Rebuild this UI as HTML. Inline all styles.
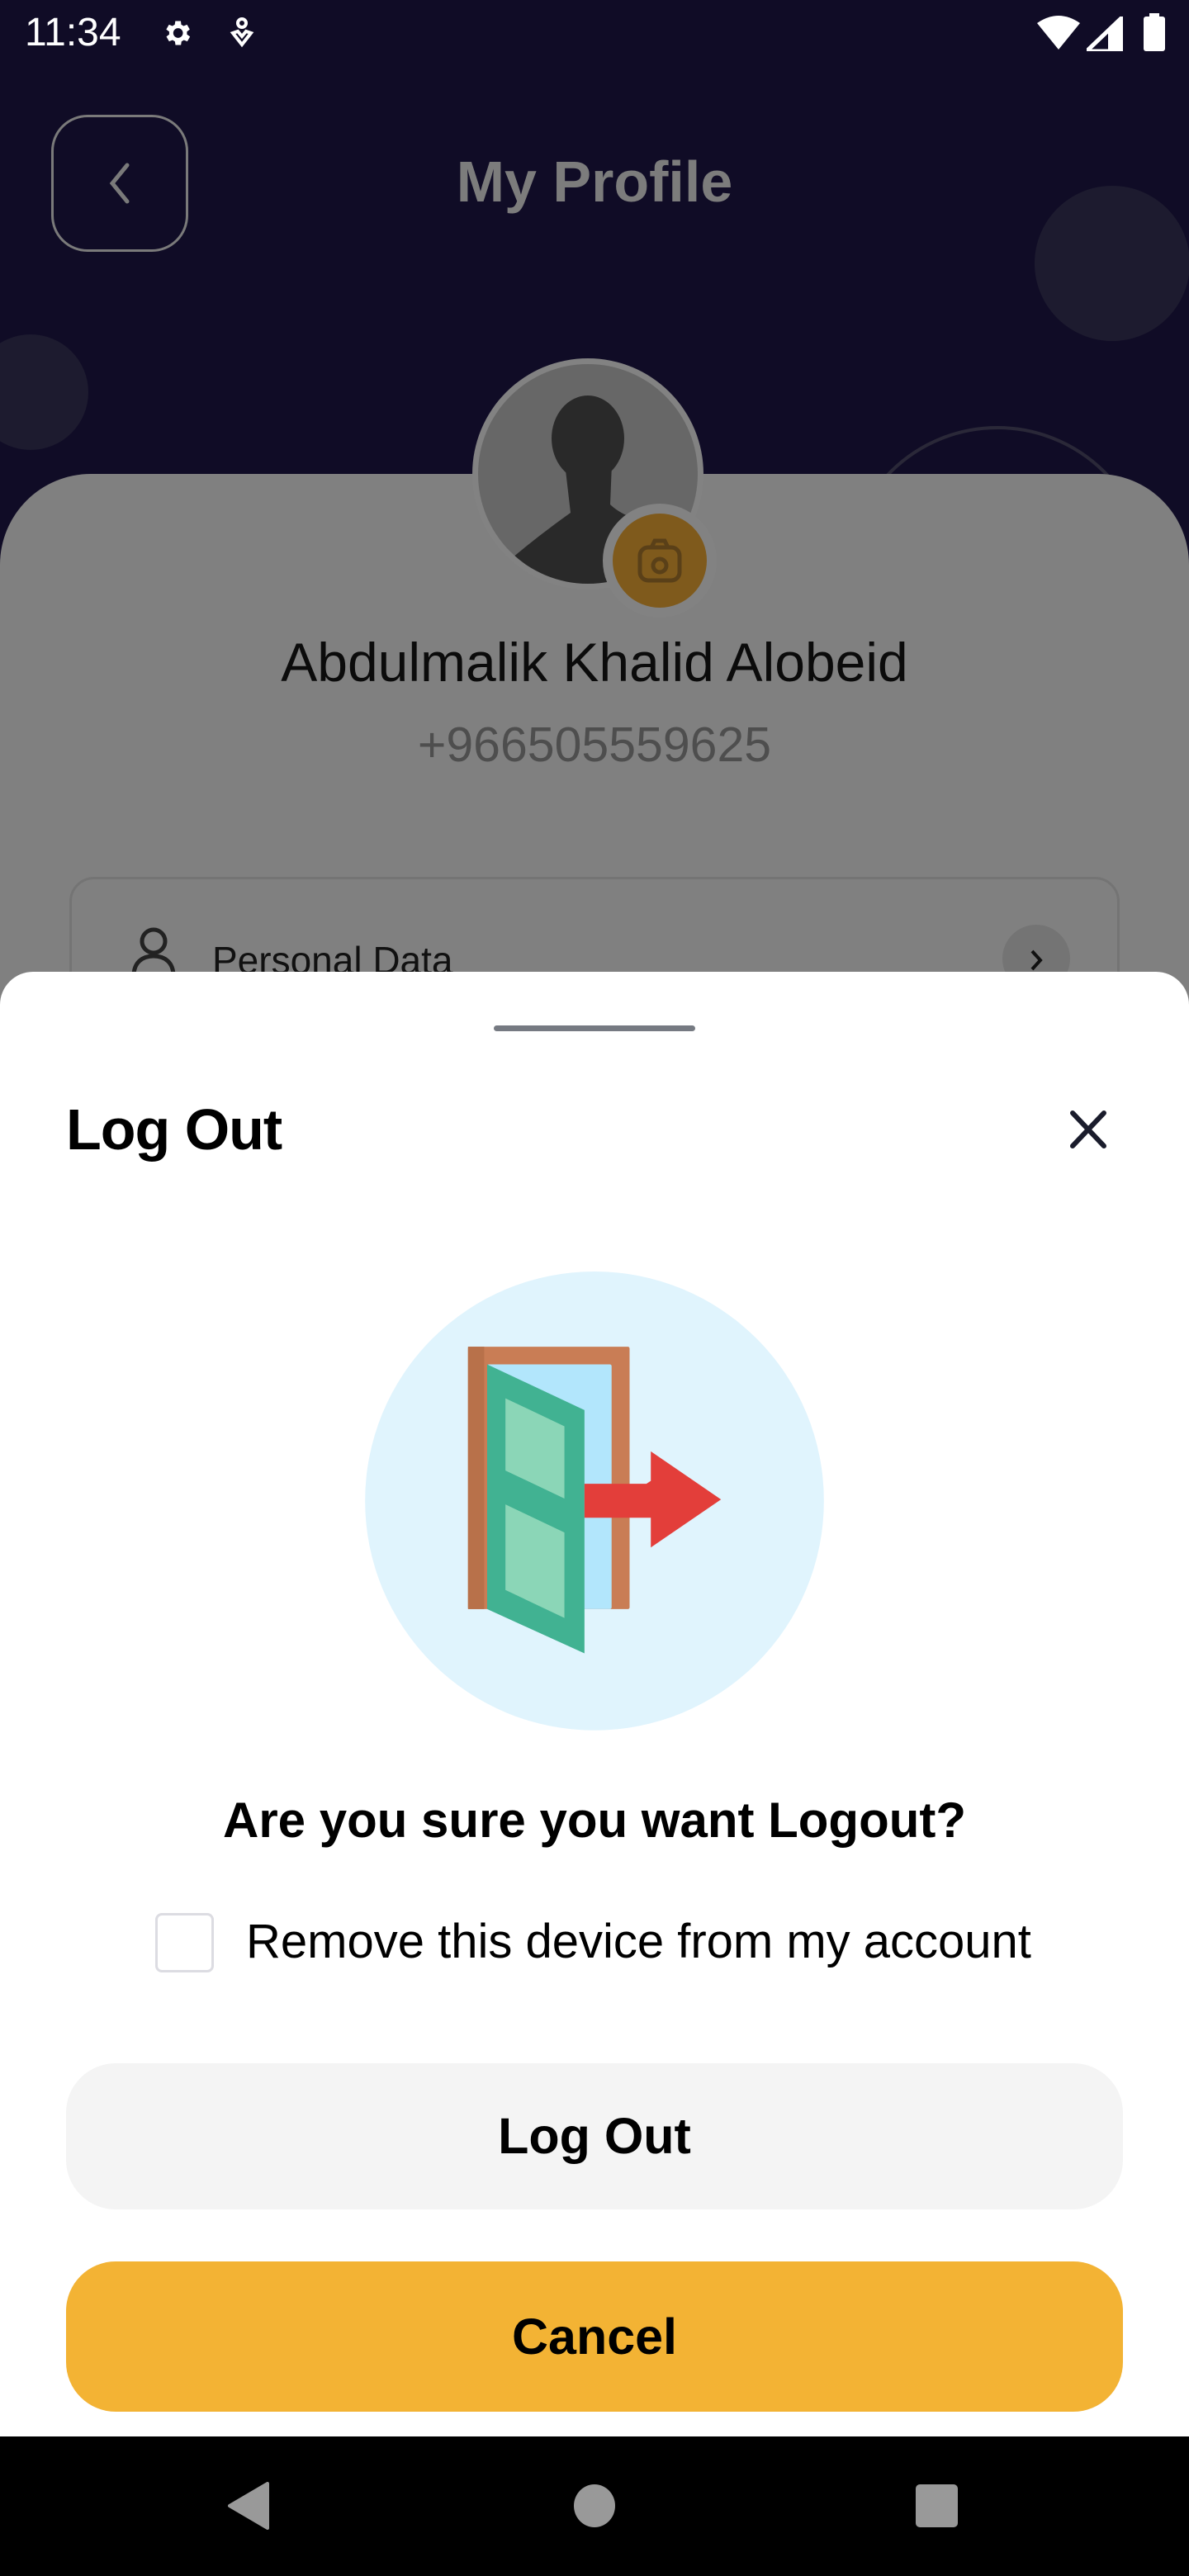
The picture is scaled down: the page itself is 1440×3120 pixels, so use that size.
<!DOCTYPE html>
<html><head><meta charset="utf-8"><style>
*{margin:0;padding:0;box-sizing:border-box}
body{width:1440px;height:3120px;position:relative;overflow:hidden;background:#100c26;font-family:"Liberation Sans",sans-serif}
.a{position:absolute}
</style></head><body>
<div class="a" style="left:0;top:0;width:1440px;height:1200px;background:#100c26"></div>
<div class="a" style="left:1253px;top:225px;width:188px;height:188px;border-radius:50%;background:#1d1b2f"></div>
<div class="a" style="left:-33px;top:405px;width:140px;height:140px;border-radius:50%;background:#1d1b2f"></div>
<div class="a" style="left:1023px;top:516px;width:370px;height:370px;border-radius:50%;border:4px solid #2a2838"></div>
<div class="a" style="left:0;top:574px;width:1440px;height:700px;border-radius:110px 110px 0 0;background:#808080"></div>
<div class="a" style="left:30px;top:12px;color:#fff;font-size:48px">11:34</div>
<svg class="a" style="left:194px;top:20px" width="40" height="40" viewBox="0 0 24 24"><path fill="#fff" d="M19.4 13a7.5 7.5 0 000-2l2.1-1.6-2-3.5-2.5 1a7 7 0 00-1.7-1L15 3.3h-4l-.4 2.6a7 7 0 00-1.7 1l-2.5-1-2 3.5L6.6 11a7.5 7.5 0 000 2l-2.1 1.6 2 3.5 2.5-1a7 7 0 001.7 1l.4 2.6h4l.4-2.6a7 7 0 001.7-1l2.5 1 2-3.5zM13 15.5a3.5 3.5 0 110-7 3.5 3.5 0 010 7z"/></svg>
<svg class="a" style="left:276px;top:20px" width="34" height="40" viewBox="0 0 17 20"><circle cx="8.5" cy="4" r="2.5" fill="none" stroke="#fff" stroke-width="2"/><path d="M3 10l5.5 7 5.5-7-3 -1-2.5 3-2.5-3z" fill="none" stroke="#fff" stroke-width="2"/></svg>
<svg class="a" style="left:1256px;top:18px" width="52" height="44" viewBox="0 0 26 22"><path d="M0 5Q13-4 26 5L13 21z" fill="#fff"/></svg>
<svg class="a" style="left:1316px;top:20px" width="44" height="42" viewBox="0 0 22 21"><path d="M0 21L22 0v21z" fill="none" stroke="#fff" stroke-width="2.5"/><path d="M13 21V8l9-8v21z" fill="#fff"/></svg>
<div class="a" style="left:1385px;top:20px;width:26px;height:42px;background:#fff;border-radius:3px"></div>
<div class="a" style="left:1392px;top:16px;width:12px;height:6px;background:#fff"></div>
<div class="a" style="left:62px;top:139px;width:166px;height:166px;border:3px solid #7a7a7a;border-radius:44px"></div>
<svg class="a" style="left:128px;top:196px" width="34" height="52" viewBox="0 0 34 52"><path d="M26 4L8 26l18 22" fill="none" stroke="#7a7a7a" stroke-width="5" stroke-linecap="round"/></svg>
<div class="a" style="left:0;top:180px;width:1440px;text-align:center;color:#7c7c7c;font-size:70px;font-weight:bold">My Profile</div>
<div class="a" style="left:572px;top:434px;width:280px;height:280px;border-radius:50%;background:#828282"></div>
<div class="a" style="left:579px;top:441px;width:266px;height:266px;border-radius:50%;background:#676767;overflow:hidden">
<svg width="266" height="266" viewBox="0 0 266 266"><ellipse cx="133" cy="90" rx="44" ry="52" fill="#292929"/><path d="M105 120L112 180Q70 210 35 240L60 270H230L240 200Q180 190 160 170L162 120z" fill="#292929"/></svg></div>
<div class="a" style="left:730px;top:610px;width:138px;height:138px;border-radius:50%;background:#828282"></div>
<div class="a" style="left:742px;top:622px;width:114px;height:114px;border-radius:50%;background:#7f5a1c"></div>
<svg class="a" style="left:769px;top:647px" width="60" height="64" viewBox="0 0 30 32"><rect x="3" y="8" width="24" height="20" rx="5" fill="none" stroke="#5a4018" stroke-width="2.5"/><path d="M10 8l2-4h6l2 4" fill="none" stroke="#5a4018" stroke-width="2.5"/><circle cx="15" cy="19" r="4" fill="none" stroke="#5a4018" stroke-width="2.5"/></svg>
<div class="a" style="left:0;top:764px;width:1440px;text-align:center;color:#0b0b0b;font-size:66px">Abdulmalik Khalid Alobeid</div>
<div class="a" style="left:0;top:868px;width:1440px;text-align:center;color:#4e4e4e;font-size:59px">+966505559625</div>
<div class="a" style="left:84px;top:1062px;width:1272px;height:300px;border:3px solid #747474;border-radius:30px"></div>
<svg class="a" style="left:158px;top:1122px" width="56" height="60" viewBox="0 0 28 30"><circle cx="14" cy="9" r="7" fill="none" stroke="#222" stroke-width="2.5"/><path d="M2 30c0-8 5-12 12-12s12 4 12 12" fill="none" stroke="#222" stroke-width="2.5"/></svg>
<div class="a" style="left:257px;top:1136px;color:#111;font-size:46px">Personal Data</div>
<div class="a" style="left:1214px;top:1120px;width:82px;height:82px;border-radius:50%;background:#747474"></div>
<svg class="a" style="left:1245px;top:1148px" width="20" height="30" viewBox="0 0 20 30"><path d="M5 4l10 11-10 11" fill="none" stroke="#111" stroke-width="4"/></svg>
<div class="a" style="left:0;top:1177px;width:1440px;height:1780px;background:#fff;border-radius:40px 40px 0 0"></div>
<div class="a" style="left:598px;top:1242px;width:244px;height:7px;border-radius:4px;background:#767a82"></div>
<div class="a" style="left:80px;top:1328px;color:#000;font-size:70px;font-weight:bold;letter-spacing:-1px">Log Out</div>
<svg class="a" style="left:1294px;top:1345px" width="48" height="46" viewBox="0 0 48 46"><path d="M5 3l38 40M43 3L5 43" stroke="#1a1c2c" stroke-width="6" stroke-linecap="round"/></svg>
<svg class="a" style="left:440px;top:1540px" width="560" height="560" viewBox="0 0 1568 1568">
<circle cx="784" cy="778" r="778" fill="#e0f4fd"/>
<rect x="355" y="255" width="548" height="890" rx="6" fill="#c97d55"/>
<rect x="355" y="255" width="55" height="890" fill="#b8714a"/>
<rect x="420" y="315" width="422" height="830" rx="6" fill="#b2e6fc"/>
<path d="M420 315L750 470V1295L420 1145z" fill="#41b292"/>
<path d="M482 430l200 95v245l-200-95z" fill="#8bd6b7"/>
<path d="M482 790l200 95v290l-200-95z" fill="#8bd6b7"/>
<path d="M750 720h210l15-10V610l238 163-238 163V835H750z" fill="#e33e3a"/>
</svg>
<div class="a" style="left:0;top:2170px;width:1440px;text-align:center;color:#000;font-size:60px;font-weight:bold">Are you sure you want Logout?</div>
<div class="a" style="left:188px;top:2317px;width:71px;height:72px;border:3px solid #dcdce2;border-radius:8px"></div>
<div class="a" style="left:298px;top:2318px;color:#000;font-size:58px">Remove this device from my account</div>
<div class="a" style="left:80px;top:2499px;width:1280px;height:177px;border-radius:60px;background:#f4f4f4;text-align:center;line-height:177px;font-size:61px;font-weight:bold;color:#000">Log Out</div>
<div class="a" style="left:80px;top:2739px;width:1280px;height:182px;border-radius:60px;background:#f3b334;text-align:center;line-height:182px;font-size:61px;font-weight:bold;color:#000">Cancel</div>
<div class="a" style="left:0;top:2951px;width:1440px;height:169px;background:#000"></div>
<svg class="a" style="left:274px;top:3006px" width="52" height="58" viewBox="0 0 52 58"><path d="M50 2v54L4 29z" fill="#999" stroke="#999" stroke-width="4" stroke-linejoin="round"/></svg>
<div class="a" style="left:695px;top:3009px;width:50px;height:52px;border-radius:50%;background:#999"></div>
<div class="a" style="left:1109px;top:3009px;width:51px;height:52px;border-radius:5px;background:#999"></div>
</body></html>
